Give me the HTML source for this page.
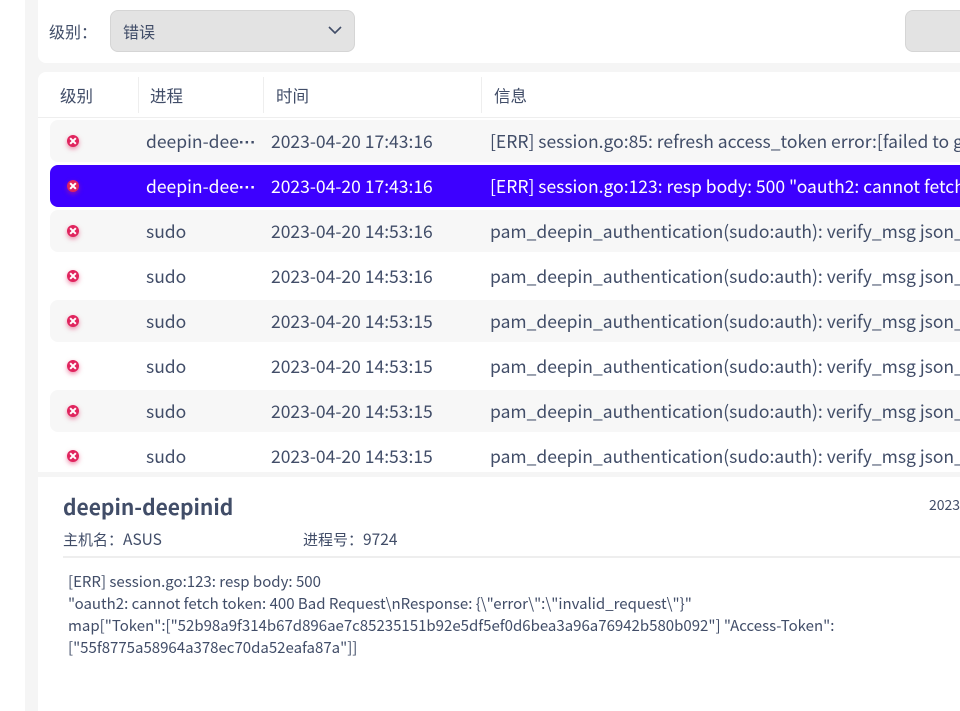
<!DOCTYPE html><html><head><meta charset="utf-8"><style>
*{margin:0;padding:0;box-sizing:border-box}
html,body{width:960px;height:711px;overflow:hidden}
body{background:#f5f5f5;font-family:"Noto Sans CJK SC","Liberation Sans",sans-serif;color:#414d68;position:relative}
.strip{position:absolute;left:0;top:0;width:25px;height:711px;background:#fff}
.top{position:absolute;left:38px;top:0;width:940px;height:63px;background:#fff;border-radius:0 0 0 8px}
.lbl{position:absolute;left:11px;top:19px;font-size:16px;line-height:24px}
.sel{position:absolute;left:72px;top:10px;width:245px;height:42px;background:#e3e3e3;border:1px solid #d5d5d5;border-radius:8px;font-size:16px;line-height:24px;padding:8px 12px}
.sel svg{position:absolute;right:12px;top:15px}
.btn{position:absolute;left:867px;top:10px;width:100px;height:42px;background:#e3e3e3;border:1px solid #d5d5d5;border-radius:8px}
.tbl{position:absolute;left:38px;top:72px;width:940px;height:400px;background:#fff;border-radius:8px 0 0 0}
.hd{position:absolute;top:11px;font-size:16.5px;line-height:24px}
.sep{position:absolute;top:5px;width:1px;height:36px;background:#eee}
.hline{position:absolute;top:45px;left:0;width:940px;height:1px;background:#eee}
.row{position:absolute;left:12px;width:930px;height:42px;border-radius:8px;font-size:17.5px}
.row.g{background:#f7f7f7}
.row.s{background:#3d00ff;color:#fff}
.row span{position:absolute;top:9px;line-height:26px;white-space:nowrap}
.el{font-family:"Liberation Sans",sans-serif;font-size:17px;font-weight:bold}
.ic{position:absolute;left:17px;top:15px;width:12px;height:12px;border-radius:50%;background:#e0245e;box-shadow:0 2px 5px rgba(224,36,94,.5)}
.ic:before,.ic:after{content:"";position:absolute;left:5px;top:2px;width:2px;height:8px;background:#fff;transform:rotate(45deg)}
.ic:after{transform:rotate(-45deg)}
.det{position:absolute;left:38px;top:477px;width:940px;height:240px;background:#fff}
</style></head><body>
<div class="strip"></div>
<div class="top"><div class="lbl">级别：</div><div class="sel">错误<svg width="14" height="9" viewBox="0 0 14 9"><path d="M1 1l6 6 6-6" fill="none" stroke="#414d68" stroke-width="1.6"/></svg></div><div class="btn"></div></div>
<div class="tbl">
<div class="hd" style="left:22px">级别</div><div class="sep" style="left:100px"></div>
<div class="hd" style="left:112px">进程</div><div class="sep" style="left:225px"></div>
<div class="hd" style="left:238px">时间</div><div class="sep" style="left:443px"></div>
<div class="hd" style="left:456px">信息</div>
<div class="hline"></div>
</div>
<div style="position:absolute;left:38px;top:0">
<div class="row g" style="top:120px"><i class="ic"></i><span style="left:96px">deepin-dee<b class="el">···</b></span><span style="left:221px">2023-04-20 17:43:16</span><span style="left:440px">[ERR] session.go:85: refresh access_token error:[failed to get</span></div>
<div class="row s" style="top:165px"><i class="ic"></i><span style="left:96px">deepin-dee<b class="el">···</b></span><span style="left:221px">2023-04-20 17:43:16</span><span style="left:440px">[ERR] session.go:123: resp body: 500 "oauth2: cannot fetch</span></div>
<div class="row g" style="top:210px"><i class="ic"></i><span style="left:96px">sudo</span><span style="left:221px">2023-04-20 14:53:16</span><span style="left:440px">pam_deepin_authentication(sudo:auth): verify_msg json_</span></div>
<div class="row" style="top:255px"><i class="ic"></i><span style="left:96px">sudo</span><span style="left:221px">2023-04-20 14:53:16</span><span style="left:440px">pam_deepin_authentication(sudo:auth): verify_msg json_</span></div>
<div class="row g" style="top:300px"><i class="ic"></i><span style="left:96px">sudo</span><span style="left:221px">2023-04-20 14:53:15</span><span style="left:440px">pam_deepin_authentication(sudo:auth): verify_msg json_</span></div>
<div class="row" style="top:345px"><i class="ic"></i><span style="left:96px">sudo</span><span style="left:221px">2023-04-20 14:53:15</span><span style="left:440px">pam_deepin_authentication(sudo:auth): verify_msg json_</span></div>
<div class="row g" style="top:390px"><i class="ic"></i><span style="left:96px">sudo</span><span style="left:221px">2023-04-20 14:53:15</span><span style="left:440px">pam_deepin_authentication(sudo:auth): verify_msg json_</span></div>
<div class="row" style="top:435px;height:37px"><i class="ic"></i><span style="left:96px">sudo</span><span style="left:221px">2023-04-20 14:53:15</span><span style="left:440px">pam_deepin_authentication(sudo:auth): verify_msg json_</span></div>
</div>
<div class="det">
<div style="position:absolute;left:25px;top:15px;font-size:21px;line-height:30px;font-weight:bold">deepin-deepinid</div>
<div style="position:absolute;left:891px;top:18px;font-size:14px;line-height:20px">2023</div>
<div style="position:absolute;left:25px;top:52px;font-size:15px;line-height:20px">主机名：<span style="font-size:15.5px">ASUS</span></div>
<div style="position:absolute;left:265px;top:52px;font-size:15px;line-height:20px">进程号：<span style="font-size:15.5px">9724</span></div>
<div style="position:absolute;left:25px;top:79px;width:920px;height:2px;background:#eee"></div>
<div style="position:absolute;left:30px;top:94px;font-size:15px;line-height:22px;white-space:nowrap">[ERR] session.go:123: resp body: 500<br>"oauth2: cannot fetch token: 400 Bad Request\nResponse: {\"error\":\"invalid_request\"}"<br>map["Token":["52b98a9f314b67d896ae7c85235151b92e5df5ef0d6bea3a96a76942b580b092"] "Access-Token":<br>["55f8775a58964a378ec70da52eafa87a"]]</div>
</div>
</body></html>
